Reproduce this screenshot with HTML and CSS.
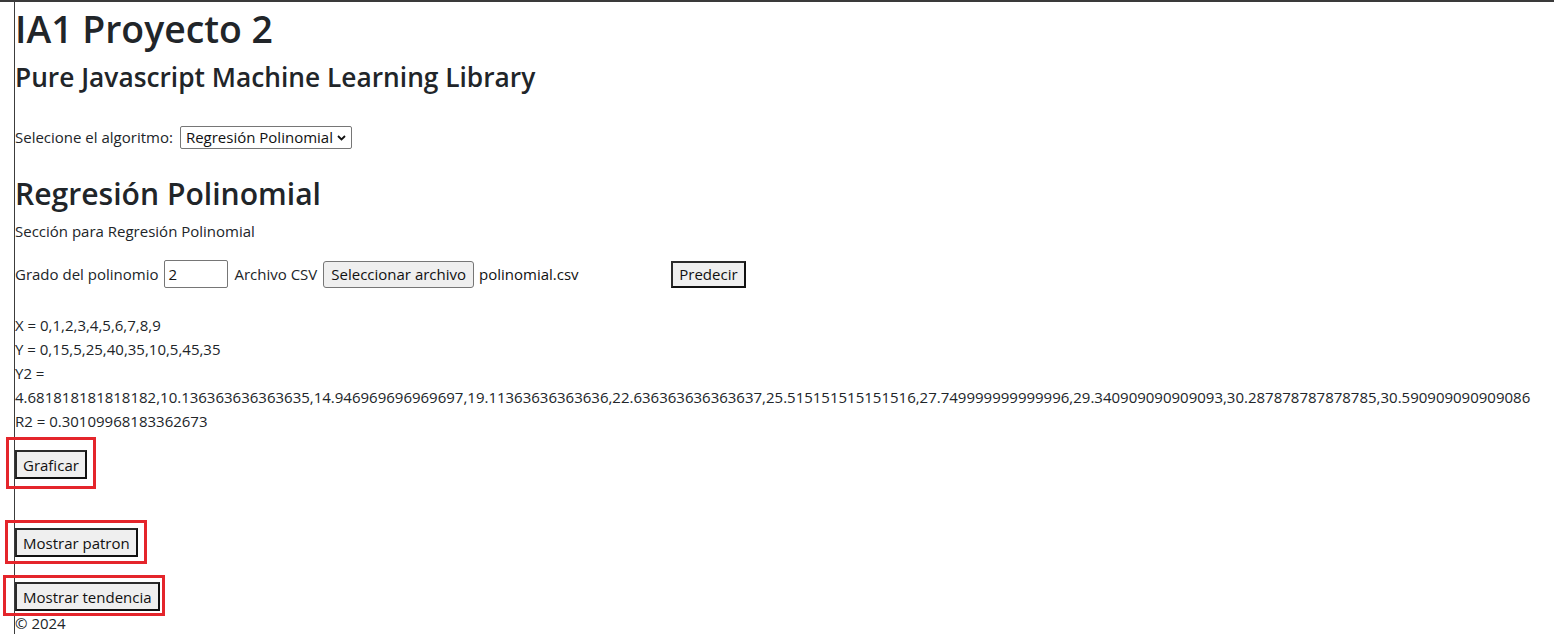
FILE: index.html
```html
<!DOCTYPE html>
<html lang="es">
<head>
<meta charset="utf-8">
<title>IA1 Proyecto 2</title>
<link rel="stylesheet" href="styles.css">
</head>
<body>
<div class="page">
  <h1 class="title">IA1 Proyecto 2</h1>
  <h3 class="subtitle">Pure Javascript Machine Learning Library</h3>

  <div class="algo-row">
    <span>Selecione el algoritmo:</span>
    <span class="select-wrap">
      <select class="algo-select">
        <option>Regresión Polinomial</option>
      </select>
      <svg class="chev" width="9" height="6" viewBox="0 0 9 6"><path d="M1 1 L4.5 4.5 L8 1" fill="none" stroke="#111" stroke-width="1.8"/></svg>
    </span>
  </div>

  <h2 class="section-title">Regresión Polinomial</h2>
  <p class="section-desc">Sección para Regresión Polinomial</p>

  <div class="form-row">
    <span>Grado del polinomio</span>
    <input class="num-input" type="text" value="2">
    <span>Archivo CSV</span>
    <span class="file-input">
      <span class="file-btn">Seleccionar archivo</span>
      <span class="file-name">polinomial.csv</span>
    </span>
    <button class="btn">Predecir</button>
  </div>

  <div class="results">
    <div>X = 0,1,2,3,4,5,6,7,8,9</div>
    <div>Y = 0,15,5,25,40,35,10,5,45,35</div>
    <div>Y2 = <span class="nums">4.681818181818182,10.136363636363635,14.946969696969697,19.11363636363636,22.636363636363637,25.515151515151516,27.749999999999996,29.340909090909093,30.287878787878785,30.590909090909086</span></div>
    <div>R2 = 0.30109968183362673</div>
  </div>

  <div class="btn-row graficar">
    <span class="mark mark-1"><button class="btn">Graficar</button></span>
  </div>
  <div class="btn-row patron">
    <span class="mark mark-2"><button class="btn">Mostrar patron</button></span>
  </div>
  <div class="btn-row tendencia">
    <span class="mark mark-3"><button class="btn">Mostrar tendencia</button></span>
  </div>

  <footer class="footer">© 2024</footer>
</div>
</body>
</html>
```

FILE: styles.css
```css
html, body {
  margin: 0;
  padding: 0;
  overflow: hidden;
}

body {
  font-family: "Open Sans", "Noto Sans", sans-serif;
  font-size: 15px;
  line-height: 24px;
  color: #212529;
  background: #fff;
  border-top: 2px solid #3a3a3a;
}

.page {
  margin-left: 14px;
  border-left: 1px solid #3c3c3c;
  padding-top: 3px;
  height: 632px;
  box-sizing: border-box;
}

.title {
  margin: 0;
  font-size: 37.4px;
  line-height: 48px;
  font-weight: 600;
}

.subtitle {
  margin: 7px 0 0;
  font-size: 26.3px;
  line-height: 34px;
  font-weight: 600;
}

.algo-row {
  margin-top: 31px;
  height: 24px;
  display: flex;
  align-items: center;
  gap: 7px;
}

.select-wrap {
  position: relative;
  display: inline-flex;
}

.algo-select {
  appearance: none;
  -webkit-appearance: none;
  font: inherit;
  font-size: 15px;
  color: #111;
  width: 172px;
  height: 23px;
  padding: 0 18px 0 5px;
  border: 1px solid #767676;
  border-radius: 2px;
  background: #fff;
  line-height: 21px;
}

.chev {
  position: absolute;
  right: 6px;
  top: 9px;
  pointer-events: none;
}

.section-title {
  margin: 26px 0 0;
  font-size: 30.1px;
  line-height: 38px;
  font-weight: 600;
}

.section-desc {
  margin: 6px 0 0;
}

.form-row {
  margin-top: 16px;
  height: 30px;
  display: flex;
  align-items: center;
  gap: 6px;
}

.num-input {
  font: inherit;
  color: #111;
  width: 64px;
  height: 28px;
  box-sizing: border-box;
  border: 1px solid #767676;
  border-radius: 2px;
  padding: 0 3px;
  margin: 0;
}

.file-input {
  display: inline-flex;
  align-items: center;
  gap: 5px;
  width: 342px;
}

.file-btn {
  display: inline-block;
  height: 27px;
  box-sizing: border-box;
  padding: 0 7px;
  line-height: 25px;
  border: 1px solid #767676;
  border-radius: 3px;
  background: #efefef;
  color: #111;
}

.file-name {
  color: #111;
}

.btn {
  font: inherit;
  color: #111;
  height: 29px;
  box-sizing: border-box;
  padding: 0 6px;
  line-height: 24px;
  margin: 0;
  background: #efefef;
  border: 2px solid #2b2b2b;
  border-right-color: #111;
  border-bottom-color: #111;
  border-radius: 0;
}

.form-row .btn {
  height: 27px;
  line-height: 22px;
}

.results {
  margin-top: 24px;
}

.nums {
  display: inline-block;
}

.btn-row {
  display: flex;
}

.graficar { margin-top: 17px; }
.patron { margin-top: 49px; }
.tendencia { margin-top: 25px; }

.mark {
  position: relative;
  display: inline-flex;
}

.mark::after {
  content: "";
  position: absolute;
  border: 3px solid #e4252b;
  pointer-events: none;
}

.mark-1::after { left: -9px; right: -9px; top: -13px; bottom: -10px; }
.mark-2::after { left: -10px; right: -9px; top: -8px; bottom: -7px; }
.mark-3::after { left: -12px; right: -5px; top: -7px; bottom: -5px; }

.footer {
  margin-top: 1px;
  line-height: 22px;
}
```
